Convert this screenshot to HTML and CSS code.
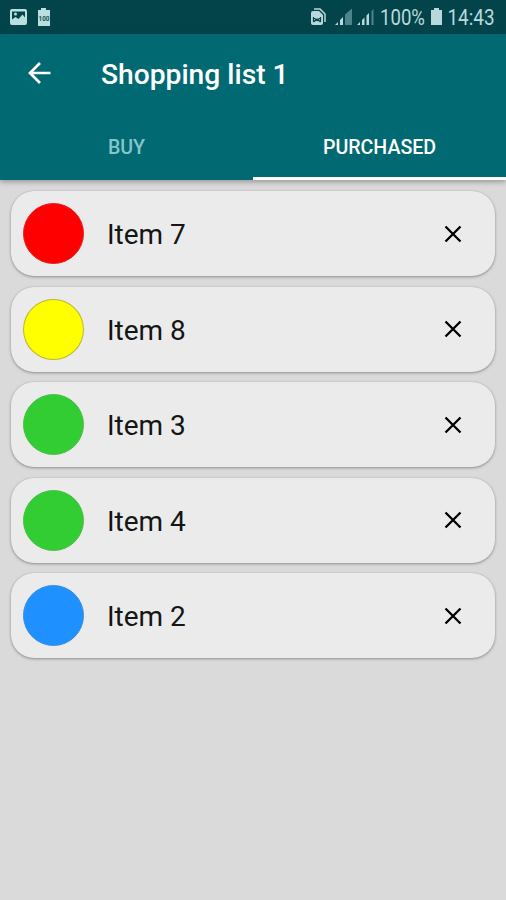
FILE: index.html
```html
<!DOCTYPE html>
<html lang="en">
<head>
<meta charset="utf-8">
<title>Shopping list 1</title>
<link rel="stylesheet" href="styles.css">
</head>
<body>
<div class="status">
  <svg width="506" height="34" viewBox="0 0 506 34">
    <path fill="#b9dfe1" fill-rule="evenodd" d="M12 9h13q2 0 2 2v12q0 2-2 2H12q-2 0-2-2V11q0-2 2-2zM12 11.500v8l3.500-2.500 3 2 4-4.500 2.500 3v-6zM15.500 12.500a1.500 1.500 0 1 1 0 3 1.500 1.500 0 0 1 0-3z"/>
    <path fill="#b9dfe1" d="M41 8h5v2h4v16H38V10h3z"/>
    <text class="tiny" x="38.500" y="20.500" textLength="11" lengthAdjust="spacingAndGlyphs">100</text>
    <path fill="none" stroke="#b9d8dc" stroke-width="1.500" d="M314 9h6l5 5v8"/>
    <path fill="#b9d8dc" d="M313 11h6l4 4v8q0 2-2 2h-8q-2 0-2-2V13q0-2 2-2z"/>
    <path fill="none" stroke="#03444b" stroke-width="1.200" d="M313.500 17v5M320.500 17v5M313.500 17.500l3.500 3 3.500-3M313.500 22l3.500-3 3.500 3"/>
    <path fill="#b9d8dc" d="M335 25l3-3v3zM340 20l3-3v8h-3z"/>
    <path fill="#4b858b" d="M345 14.500l7-6V25h-7z"/>
    <path fill="#b9d8dc" d="M357 25l3-3v3zM362 20l2.500-2.500V25H362zM366.500 15.500l2.500-2.500v12h-2.500z"/>
    <path fill="#4b858b" d="M371.500 11l2-2v16h-2z"/>
    <text x="380" y="25" textLength="45" lengthAdjust="spacingAndGlyphs">100%</text>
    <path fill="#b9d8dc" d="M434 8h5v2h3v15h-11V10h3z"/>
    <text x="447.500" y="25" textLength="47" lengthAdjust="spacingAndGlyphs">14:43</text>
  </svg>
</div>
<header class="header">
  <div class="toolbar">
    <svg class="back" width="24" height="24" viewBox="0 0 24 24"><path d="M22.500 12H2M12 2L2 12l10 10"/></svg>
    <h1>Shopping list 1</h1>
  </div>
  <nav class="tabs">
    <div class="tab"><span>BUY</span></div>
    <div class="tab active"><span>PURCHASED</span></div>
  </nav>
</header>
<main class="list">
  <div class="card"><i class="dot red"></i><span class="name">Item 7</span><svg class="close" width="18" height="18" viewBox="0 0 18 18"><path d="M1.500 1.500l15 15M16.500 1.500l-15 15"/></svg></div>
  <div class="card"><i class="dot yellow"></i><span class="name">Item 8</span><svg class="close" width="18" height="18" viewBox="0 0 18 18"><path d="M1.500 1.500l15 15M16.500 1.500l-15 15"/></svg></div>
  <div class="card"><i class="dot green"></i><span class="name">Item 3</span><svg class="close" width="18" height="18" viewBox="0 0 18 18"><path d="M1.500 1.500l15 15M16.500 1.500l-15 15"/></svg></div>
  <div class="card"><i class="dot green"></i><span class="name">Item 4</span><svg class="close" width="18" height="18" viewBox="0 0 18 18"><path d="M1.500 1.500l15 15M16.500 1.500l-15 15"/></svg></div>
  <div class="card"><i class="dot blue"></i><span class="name">Item 2</span><svg class="close" width="18" height="18" viewBox="0 0 18 18"><path d="M1.500 1.500l15 15M16.500 1.500l-15 15"/></svg></div>
</main>
</body>
</html>
```
FILE: styles.css
```css
* { box-sizing: border-box; }
body {
  margin: 0;
  min-height: 900px;
  background: #dadada;
  font-family: Roboto, "Liberation Sans", sans-serif;
}
.status { height: 34px; background: #03444b; }
.status svg { display: block; }
.status text { font-size: 21.500px; fill: #b9d8dc; }
.status .tiny { font-size: 7px; font-weight: 700; fill: #174f55; }
.header {
  height: 146px;
  background: #006972;
  color: #fff;
  box-shadow: 0 2px 5px rgba(0, 0, 0, .3);
}
.toolbar { display: flex; align-items: center; height: 80px; padding-left: 28px; }
.back { margin-top: -2px; fill: none; stroke: #fff; stroke-width: 2.700; }
h1 { margin: 2px 0 0 49px; font-size: 28.200px; font-weight: 500; line-height: 34px; white-space: nowrap; }
.tabs { display: flex; height: 66px; }
.tab {
  flex: 1;
  padding-top: 21px;
  text-align: center;
  font-size: 19.600px;
  font-weight: 500;
  line-height: 25px;
  color: #86c5ca;
}
.tab.active { color: #fff; border-bottom: 3px solid #fff; }
.list { display: flex; flex-direction: column; gap: 10.600px; padding: 11px 11px 0; }
.card {
  display: flex;
  align-items: center;
  height: 85px;
  padding: 0 33.500px 0 12px;
  border-radius: 23px;
  background: #ebebeb;
  box-shadow: 0 1px 3px rgba(0, 0, 0, .35), 0 0 1px rgba(0, 0, 0, .15);
}
.dot { width: 61px; height: 61px; border-radius: 50%; border: 1px solid rgba(100, 100, 100, .45); }
.red { background-color: #f00; border-color: #e52222; }
.yellow { background-color: #ff0; }
.green { background-color: #32cd32; border-color: #4cbe4c; }
.blue { background-color: #1e90ff; border-color: #3c8fe0; }
.name { flex: 1; margin: 3px 0 0 23px; font-size: 28px; line-height: 34px; color: #151515; }
.close { fill: none; stroke: #000; stroke-width: 2.300; }
```
